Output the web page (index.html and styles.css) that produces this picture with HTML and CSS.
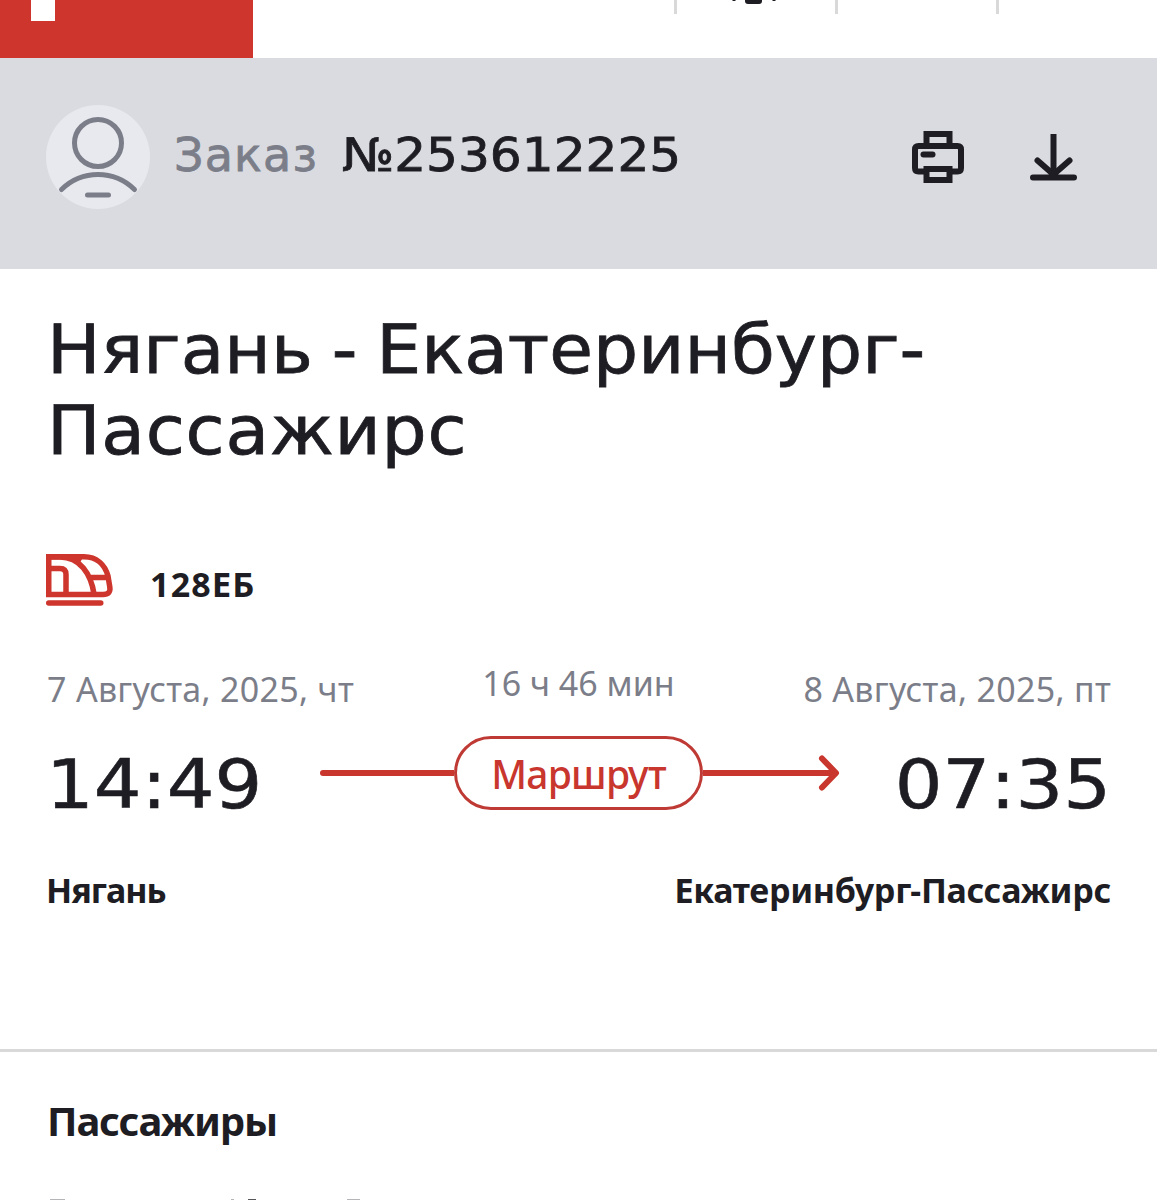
FILE: index.html
```html
<!DOCTYPE html>
<html lang="ru">

<head>
  <meta charset="UTF-8" />
  <meta name="viewport" content="width=device-width, initial-scale=1.0" />
  <title>Заказ №253612225</title>
  <link rel="stylesheet" href="styles.css">
</head>

<body>
  <!-- верхняя панель -->
  <header class="topbar">
    <div class="logo"><span class="logo-leg"></span></div>
    <div class="topmenu">
      <span class="cell">
        <svg width="44" height="5" viewBox="0 0 44 5">
          <path d="M13 0h17v1q0 3-3 3H16q-3 0-3-3z" />
          <path d="M0 0h4l-1 1H1zM40 0h4l-1 1h-2z" />
        </svg>
      </span>
      <span class="cell"></span>
      <span class="cell"></span>
    </div>
  </header>

  <!-- номер заказа -->
  <section class="order">
    <svg class="avatar" width="104" height="104" viewBox="0 0 104 104">
      <circle cx="52" cy="52" r="52" fill="#e8e9ee" />
      <g fill="none" stroke="#7b7e89" stroke-width="5" stroke-linecap="round">
        <circle cx="52" cy="38" r="23.5" />
        <path d="M15.500 84.500C36 64.500 68 64.500 88.500 84.500M41.500 90h21" />
      </g>
    </svg>
    <div class="order-title">
      <span class="order-label">Заказ</span>
      <span class="order-number">№253612225</span>
    </div>
    <div class="order-tools">
      <svg width="52" height="52" viewBox="0 0 52 52" fill="none" stroke="#1d1d23" stroke-width="6">
        <path d="M14.500 14V3h23v11M12 40.500H6.500Q3 40.500 3 37V18.500Q3 15 6.500 15h39q3.500 0 3.500 3.500V37q0 3.500-3.500 3.500H40" />
        <path d="M14.500 38h23v11h-23z" />
        <path d="M11.500 23.500h9" stroke-linecap="round" />
      </svg>
      <svg width="48" height="48" viewBox="0 0 48 48" fill="none" stroke="#1d1d23" stroke-width="6" stroke-linecap="round">
        <path d="M23.500 1v42" stroke-linecap="butt" />
        <path d="M7.500 27.500l16 14 16-14M3 44.500h41" />
      </svg>
    </div>
  </section>

  <!-- маршрут поездки -->
  <main class="trip">
    <h1 class="trip-title">Нягань - Екатеринбург-<br><span class="trip-title-end">Пассажирс</span></h1>
    <div class="train">
      <svg width="68" height="52" viewBox="0 0 68 52" fill="none" stroke="#ce352c" stroke-width="5.500">
        <path d="M2.750 2.750H38C51 2.750 59 11 62 22l1.800 11Q65 40.500 57 40.500H2.750z" />
        <path d="M2.750 14.500H14q6 0 6 6v20" />
        <path d="M3 3H14C34 3 45 20 48 40M27 3L35 7M43 23.500h18" />
        <path d="M2.750 49h52" stroke-linecap="round" />
      </svg>
      <span class="train-number">128ЕБ</span>
    </div>
    <div class="dates">
      <span class="date">7 Августа, 2025, чт</span>
      <span class="duration">16 ч 46 мин</span>
      <span class="date date-end">8 Августа, 2025, пт</span>
    </div>
    <div class="times">
      <span class="time">14:49</span>
      <div class="route">
        <span class="route-line"></span>
        <button class="route-btn">Маршрут</button>
        <svg class="route-arrow" width="137" height="36" viewBox="0 0 137 36" fill="none" stroke="#c8362e" stroke-width="6" stroke-linecap="round" stroke-linejoin="round">
          <path d="M-3 18h135" />
          <path d="M119 3.500L133 18l-14 14.500" />
        </svg>
      </div>
      <span class="time time-end">07:35</span>
    </div>
    <div class="stations">
      <span class="station">Нягань</span>
      <span class="station station-end">Екатеринбург-Пассажирс</span>
    </div>
  </main>

  <section class="passengers">
    <h2 class="passengers-title">Пассажиры</h2>
    <!-- верхний край следующей строки -->
    <div class="passenger-row"><i></i><i></i><i></i><i></i></div>
  </section>
</body>

</html>
```
FILE: styles.css
```css
* {
  margin: 0;
  padding: 0;
  box-sizing: border-box;
}

body {
  height: 1200px;
  overflow: hidden;
  background: #fff;
  color: #1d1d23;
  font-family: "Noto Sans", sans-serif;
}

svg {
  display: block;
}

.topbar {
  display: flex;
  justify-content: space-between;
  height: 58px;
}

.logo {
  width: 253px;
  padding-left: 31px;
  background: #ce352c;
}

.logo-leg {
  display: block;
  width: 24px;
  height: 21px;
  background: #fff;
}

.topmenu {
  display: flex;
  width: 483px;
  height: 14px;
}

.cell {
  width: 161px;
  border-left: 3px solid #d9d9d9;
}

.cell svg {
  margin-left: 55px;
  fill: #1d1d23;
}

.order {
  display: flex;
  align-items: flex-start;
  height: 211px;
  padding: 47px 79px 0 46px;
  background: #dadbe0;
}

.order-title {
  display: flex;
  gap: 24px;
  margin-left: 24px;
  font: 46px/100px "DejaVu Sans", sans-serif;
  -webkit-text-stroke: 0.8px currentColor;
}

.order-label {
  color: #7b7e89;
  letter-spacing: 1.2px;
}

/* широкое начертание */
.order-number {
  transform: scaleX(1.09);
  transform-origin: left;
}

.order-tools {
  display: flex;
  align-items: center;
  gap: 66px;
  margin-left: auto;
  padding-top: 26px;
}

.trip {
  height: 783px;
  padding: 41px 46px 0;
  border-bottom: 3px solid #d9d9d9;
}

.trip-title {
  padding-left: 1px;
  font: 67px/81px "DejaVu Sans", sans-serif;
  word-spacing: -3.5px;
  white-space: nowrap;
  transform: scaleX(1.062);
  transform-origin: left;
  -webkit-text-stroke: 0.8px currentColor;
}

.trip-title-end {
  letter-spacing: 0.7px;
}

.train {
  display: flex;
  align-items: center;
  gap: 36px;
  margin-top: 82px;
  height: 52px;
}

.train-number {
  padding-top: 8px;
  font-size: 34px;
  font-weight: bold;
  letter-spacing: 1.2px;
}

.dates {
  display: grid;
  grid-template-columns: 1fr auto 1fr;
  margin-top: 59px;
  color: #7b7e89;
  font-size: 34px;
  line-height: 48px;
}

.date {
  padding-left: 1px;
  letter-spacing: 0.3px;
}

.duration {
  margin-top: -6px;
}

.date-end {
  text-align: right;
}

.times {
  display: grid;
  grid-template-columns: 274px 520px 1fr;
  height: 98px;
  margin-top: 23px;
}

.time {
  font: 67px/98px "DejaVu Sans", sans-serif;
  transform: scaleX(1.12);
  transform-origin: left;
  -webkit-text-stroke: 0.6px currentColor;
}

.time-end {
  text-align: right;
  transform-origin: right;
}

.route {
  display: flex;
  align-items: center;
  height: 74px;
}

.route-line {
  width: 134px;
  height: 6px;
  border-radius: 3px 0 0 3px;
  background: #c8362e;
}

.route-btn {
  width: 249px;
  height: 74px;
  border: 3px solid #bf3a34;
  border-radius: 37px;
  background: #fff;
  color: #c8362e;
  font: 500 39px "Noto Sans", sans-serif;
  letter-spacing: -0.7px;
}

.stations {
  display: flex;
  justify-content: space-between;
  margin-top: 32px;
  font-size: 34px;
  font-weight: bold;
  line-height: 48px;
  letter-spacing: -0.3px;
}

.station:first-child {
  letter-spacing: -1px;
}

.passengers {
  padding: 41px 47px 0;
}

.passengers-title {
  font-size: 40px;
  line-height: 56px;
  letter-spacing: -1.1px;
}

.passenger-row {
  display: flex;
  height: 1px;
  margin: 50px 0 0 3px;
}

.passenger-row i {
  width: 15px;
  background: #b5b5b9;
}

.passenger-row i:nth-child(2) {
  width: 3px;
  margin-left: 166px;
}

.passenger-row i:nth-child(3) {
  width: 8px;
  margin-left: 14px;
  background: #55555a;
}

.passenger-row i:nth-child(4) {
  width: 13px;
  margin-left: 91px;
}
```
